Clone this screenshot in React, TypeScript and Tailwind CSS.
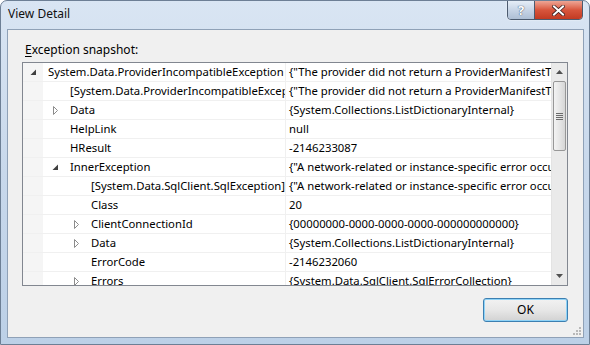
import React from 'react'

type Row = {
  name: string
  value: string
  level: number
  expander?: 'open' | 'closed'
}

const rows: Row[] = [
  { name: 'System.Data.ProviderIncompatibleException', value: '{"The provider did not return a ProviderManifestToken string."}', level: 0, expander: 'open' },
  { name: '[System.Data.ProviderIncompatibleException]', value: '{"The provider did not return a ProviderManifestToken string."}', level: 1 },
  { name: 'Data', value: '{System.Collections.ListDictionaryInternal}', level: 1, expander: 'closed' },
  { name: 'HelpLink', value: 'null', level: 1 },
  { name: 'HResult', value: '-2146233087', level: 1 },
  { name: 'InnerException', value: '{"A network-related or instance-specific error occurred"}', level: 1, expander: 'open' },
  { name: '[System.Data.SqlClient.SqlException]', value: '{"A network-related or instance-specific error occurred"}', level: 2 },
  { name: 'Class', value: '20', level: 2 },
  { name: 'ClientConnectionId', value: '{00000000-0000-0000-0000-000000000000}', level: 2, expander: 'closed' },
  { name: 'Data', value: '{System.Collections.ListDictionaryInternal}', level: 2, expander: 'closed' },
  { name: 'ErrorCode', value: '-2146232060', level: 2 },
  { name: 'Errors', value: '{System.Data.SqlClient.SqlErrorCollection}', level: 2, expander: 'closed' },
]

// name cell starts at the grid's inner left edge; level 0 expander sits in the grey gutter
const indent = ['pl-[7px]', 'pl-[29px]', 'pl-[50px]']

function Expander({ kind }: { kind: 'open' | 'closed' }) {
  if (kind === 'open') {
    return (
      <svg width="7" height="7" viewBox="0 0 7 7" className="mr-[11px] shrink-0">
        <polygon points="6,0.5 6,6 0.5,6" fill="#404040" />
      </svg>
    )
  }
  return (
    <svg width="7" height="9" viewBox="0 0 7 9" className="mr-[11px] shrink-0">
      <polygon points="1.5,0.5 5.5,4.5 1.5,8.5" fill="#fff" stroke="#8c8c8c" />
    </svg>
  )
}

function TreeRow({ row }: { row: Row }) {
  return (
    <div className="flex h-[19px] shrink-0 border-b border-[#f0f0f0]">
      <div
        className={`flex w-[263px] shrink-0 items-center overflow-hidden whitespace-nowrap border-r border-[#f0f0f0] bg-[linear-gradient(to_right,#f5f5f5_20px,#ffffff_20px)] ${indent[row.level]}`}
      >
        {row.expander ? <Expander kind={row.expander} /> : <span className="w-[18px] shrink-0" />}
        <span>{row.name}</span>
      </div>
      <div className="flex flex-1 items-center overflow-hidden whitespace-nowrap bg-white pl-[3px]">{row.value}</div>
    </div>
  )
}

function Scrollbar() {
  return (
    <div className="flex w-[16px] shrink-0 flex-col border-l border-[#e3e3e3] bg-[#eaeaea]">
      <div className="flex h-[18px] items-center justify-center">
        <svg width="7" height="4" viewBox="0 0 7 4">
          <polygon points="0,4 3.5,0 7,4" fill="#505050" />
        </svg>
      </div>
      <div className="mx-[1px] flex h-[70px] items-center justify-center rounded-[2px] border border-[#979797] bg-gradient-to-r from-[#f3f3f3] via-[#e6e6e6] to-[#d6d6d6]">
        <div className="flex flex-col gap-[1px]">
          <div className="h-px w-[7px] bg-[#6b6b6b]" />
          <div className="h-px w-[7px] bg-[#6b6b6b]" />
          <div className="h-px w-[7px] bg-[#6b6b6b]" />
          <div className="h-px w-[7px] bg-[#6b6b6b]" />
        </div>
      </div>
      <div className="flex-1" />
      <div className="flex h-[18px] items-center justify-center">
        <svg width="7" height="4" viewBox="0 0 7 4">
          <polygon points="0,0 3.5,4 7,0" fill="#505050" />
        </svg>
      </div>
    </div>
  )
}

export default function App() {
  return (
    <div
      className="relative h-[345px] w-[590px] overflow-hidden rounded-t-[7px] border border-[#6d7f95] bg-gradient-to-b from-[#d9e5f3] via-[#c8d8eb] to-[#bcd0e7] text-[11.3px] leading-none text-black"
      style={{ fontFamily: '"Noto Sans", "Open Sans", sans-serif' }}
    >
      <div className="flex h-[28px] items-start pl-[7px] pt-[7px]">
        <span className="text-[12px] text-[#111]">View Detail</span>
      </div>

      {/* caption buttons */}
      <div className="absolute right-[6px] top-[-1px] flex h-[20px] overflow-hidden rounded-b-[4px] border border-[#4c5b6f] shadow-[0_0_2px_rgba(255,255,255,0.8)]">
        <div className="flex w-[27px] items-center justify-center border-r border-[#4c5b6f] bg-gradient-to-b from-[#e6eef7] via-[#c7d5e6] to-[#aebfd5]">
          <span className="text-[13px] font-bold text-white [text-shadow:0_0_1px_#44556b,0_0_1px_#44556b]">?</span>
        </div>
        <div className="flex w-[47px] items-center justify-center bg-gradient-to-b from-[#eda595] via-[#d8553c] to-[#c23a22]">
          <svg width="13" height="11" viewBox="0 0 13 11">
            <path d="M2 1.5 L11 9.5 M11 1.5 L2 9.5" stroke="#3c2020" strokeWidth="3.6" strokeLinecap="square" />
            <path d="M2 1.5 L11 9.5 M11 1.5 L2 9.5" stroke="#fff" strokeWidth="2" strokeLinecap="square" />
          </svg>
        </div>
      </div>

      <div className="ml-[6px] mr-[5px] flex h-[309px] flex-col border border-[#8fa1b7] bg-[#f0f0f0]">
        <div className="ml-[17px] mt-[14px] h-[12px] text-[12px]">
          <span className="underline underline-offset-2">E</span>xception snapshot:
        </div>
        <div className="ml-[14px] mr-[15px] mt-[6px] flex h-[224px] border border-[#828790] bg-white">
          <div className="flex flex-1 flex-col overflow-hidden">
            {rows.map((r, i) => (
              <TreeRow key={i} row={r} />
            ))}
          </div>
          <Scrollbar />
        </div>
        <div className="mr-[15px] mt-[12px] flex justify-end">
          <button className="flex h-[24px] w-[85px] items-center justify-center rounded-[3px] border border-[#3c7fb1] bg-gradient-to-b from-[#f2f2f2] via-[#e7e7e7] to-[#d2d2d2] text-[12px] shadow-[inset_0_0_0_1px_#8fd3f7]">
            OK
          </button>
        </div>
        <div className="relative flex-1">
          <div className="absolute bottom-[2px] right-[2px] grid grid-cols-3 gap-[1px]">
            <span className="h-[2px] w-[2px]" />
            <span className="h-[2px] w-[2px]" />
            <span className="h-[2px] w-[2px] bg-[#b8b8b8]" />
            <span className="h-[2px] w-[2px]" />
            <span className="h-[2px] w-[2px] bg-[#b8b8b8]" />
            <span className="h-[2px] w-[2px] bg-[#b8b8b8]" />
            <span className="h-[2px] w-[2px] bg-[#b8b8b8]" />
            <span className="h-[2px] w-[2px] bg-[#b8b8b8]" />
            <span className="h-[2px] w-[2px] bg-[#b8b8b8]" />
          </div>
        </div>
      </div>
    </div>
  )
}
